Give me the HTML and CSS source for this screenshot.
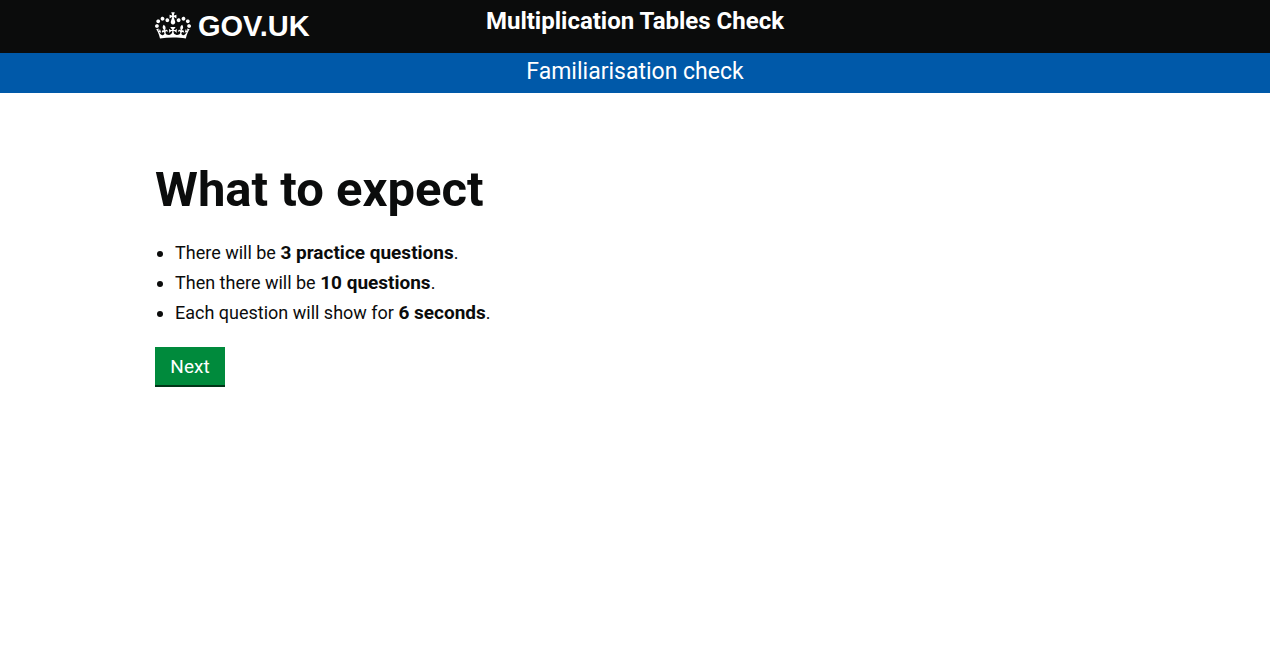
FILE: index.html
```html
<!DOCTYPE html>
<html lang="en">
<head>
  <meta charset="utf-8">
  <meta name="viewport" content="width=device-width, initial-scale=1">
  <title>Multiplication Tables Check</title>
  <link rel="stylesheet" href="styles.css">
</head>
<body>
  <header class="header">
    <div class="container header-row">
      <a class="logo" href="#">
        <svg class="crown" viewBox="0 0 132 97" aria-hidden="true">
          <path fill="currentColor" fill-rule="evenodd" d="M25 30.2c3.5 1.5 7.7-.2 9.1-3.7 1.5-3.6-.2-7.8-3.9-9.2-3.6-1.4-7.6.3-9.1 3.9-1.4 3.5.3 7.5 3.9 9zM9 39.5c3.6 1.5 7.8-.2 9.2-3.7 1.5-3.6-.2-7.8-3.9-9.1-3.6-1.5-7.6.2-9.1 3.8-1.4 3.5.3 7.5 3.8 9zM4.4 57.2c3.5 1.5 7.7-.2 9.1-3.8 1.5-3.6-.2-7.7-3.9-9.1-3.5-1.5-7.6.3-9.1 3.8-1.4 3.5.3 7.6 3.9 9.1zm38.3-21.4c3.5 1.5 7.7-.2 9.1-3.8 1.5-3.6-.2-7.7-3.9-9.1-3.6-1.5-7.6.3-9.1 3.8-1.3 3.6.4 7.7 3.9 9.1zm64.4-5.6c-3.6 1.5-7.8-.2-9.1-3.7-1.5-3.6.2-7.8 3.8-9.2 3.6-1.4 7.7.3 9.2 3.9 1.3 3.5-.4 7.5-3.9 9zm15.9 9.3c-3.6 1.5-7.7-.2-9.1-3.7-1.5-3.6.2-7.8 3.7-9.1 3.6-1.5 7.7.2 9.2 3.8 1.5 3.5-.3 7.5-3.8 9zm4.7 17.7c-3.6 1.5-7.8-.2-9.2-3.8-1.5-3.6.2-7.7 3.9-9.1 3.6-1.5 7.7.3 9.2 3.8 1.3 3.5-.4 7.6-3.9 9.1zM89.3 35.8c-3.6 1.5-7.8-.2-9.2-3.8-1.4-3.6.2-7.7 3.9-9.1 3.6-1.5 7.7.3 9.2 3.8 1.4 3.6-.3 7.7-3.9 9.1zM69.7 17.7l8.9 4.7V9.3l-8.9 2.8c-.2-.3-.5-.6-.9-.9L72.4 0H59.6l3.5 11.2c-.3.3-.6.5-.9.9l-8.8-2.8v13.1l8.8-4.7c.3.3.6.7.9.9l-5 15.4v.1c-.2.8-.4 1.6-.4 2.4 0 4.1 3.1 7.5 7 8.1h.2c.3 0 .7.1 1 .1.4 0 .7 0 1-.1h.2c4-.6 7.1-4.1 7.1-8.1 0-.8-.1-1.7-.4-2.4V34l-5.1-15.4c.4-.2.7-.6 1-.9zM66 92.8c16.9 0 32.8 1.1 47.1 3.2 4-16.9 8.9-26.7 14-33.5l-9.6-3.4c1 4.9 1.1 7.2 0 10.2-1.5-1.4-3-4.3-4.2-8.7L108.6 76c2.8-2 5-3.2 7.5-3.3-4.4 9.4-10 11.9-13.6 11.2-4.3-.8-6.3-4.6-5.6-7.9 1-4.7 5.7-5.9 8-.5 4.3-8.7-3-11.4-7.6-8.8 7.1-7.2 7.9-13.5 2.1-21.1-8 6.1-8.1 12.3-4.5 20.8-4.7-5.4-12.1-2.5-9.5 6.2 3.4-5.2 7.9-2 7.2 3.1-.6 4.3-6.4 7.8-13.5 7.2-10.3-.9-10.9-8-11.2-13.8 2.5-.5 7.1 1.8 11 7.3L80.2 60c-4.1 4.4-8 5.3-12.3 5.4 1.4-4.4 8-11.6 8-11.6H55.5s6.4 7.2 7.9 11.6c-4.2-.1-8-1-12.3-5.4l1.4 16.4c3.9-5.5 8.5-7.7 10.9-7.3-.3 5.8-.9 12.8-11.1 13.8-7.2.6-12.9-2.9-13.5-7.2-.7-5 3.8-8.3 7.1-3.1 2.7-8.7-4.6-11.6-9.4-6.2 3.7-8.5 3.6-14.7-4.6-20.8-5.8 7.6-5 13.9 2.2 21.1-4.7-2.6-11.9.1-7.7 8.8 2.3-5.5 7.1-4.2 8.1.5.7 3.3-1.3 7.1-5.7 7.9-3.5.7-9-1.8-13.5-11.2 2.5.1 4.7 1.3 7.5 3.3l-4.7-15.4c-1.2 4.4-2.7 7.2-4.3 8.7-1.1-3-.9-5.3 0-10.2l-9.5 3.4c5 6.9 9.9 16.7 14 33.5 14.8-2.1 30.8-3.2 47.7-3.2z"/>
        </svg>
        <span>GOV.UK</span>
      </a>
      <p class="service-name">Multiplication Tables Check</p>
    </div>
  </header>
  <div class="banner">Familiarisation check</div>
  <main class="container main">
    <h1 class="title">What to expect</h1>
    <ul class="list">
      <li>There will be <strong>3 practice questions</strong>.</li>
      <li>Then there will be <strong>10 questions</strong>.</li>
      <li>Each question will show for <strong>6 seconds</strong>.</li>
    </ul>
    <button class="button" type="button">Next</button>
  </main>
</body>
</html>
```
FILE: styles.css
```css
* {
  box-sizing: border-box;
}

body {
  margin: 0;
  background: #fff;
  color: #0b0c0c;
  font-family: Roboto, Arial, sans-serif;
  font-size: 19px;
  line-height: 25px;
}

.container {
  max-width: 960px;
  margin: 0 auto;
}

.header {
  background: #0b0c0c;
  color: #fff;
}

.header-row {
  display: grid;
  grid-template-columns: 1fr auto 1fr;
  align-items: start;
  padding: 6px 0 7px;
}

.logo {
  display: flex;
  align-items: center;
  justify-self: start;
  gap: 7px;
  color: inherit;
  font-family: "Liberation Sans", Arial, sans-serif;
  font-size: 29px;
  font-weight: 700;
  line-height: 40px;
  text-decoration: none;
}

.crown {
  width: 36px;
  height: 27px;
  margin-bottom: 2px;
}

.service-name {
  margin: 0;
  font-size: 24px;
  font-weight: 700;
  line-height: 30px;
}

.banner {
  padding: 4px 0 6px;
  background: #0059a9;
  color: #fff;
  font-size: 23px;
  line-height: 30px;
  text-align: center;
}

.main {
  padding: 72px 0 40px;
}

.title {
  margin: 0;
  font-size: 49px;
  font-weight: 700;
  line-height: 50px;
}

.list {
  display: grid;
  gap: 5px;
  margin: 25px 0 22px;
  padding-left: 20px;
  font-size: 18px;
}

.list strong {
  font-size: 19px;
}

.button {
  min-width: 70px;
  padding: 7px 15px 6px;
  border: 0;
  border-bottom: 2px solid #003618;
  background: #008a3c;
  color: #fff;
  font: inherit;
}
```
